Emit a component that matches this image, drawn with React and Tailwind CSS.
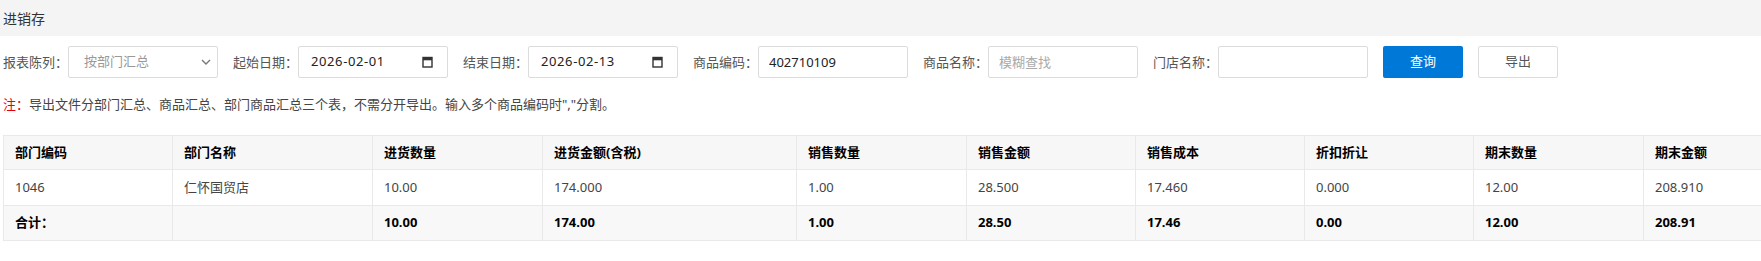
import React from 'react';

const font = { fontFamily: '"Noto Sans", "Noto Sans CJK SC", sans-serif' };

const columns = [
    { label: '部门编码', w: 'w-[169px]' },
    { label: '部门名称', w: 'w-[200px]' },
    { label: '进货数量', w: 'w-[170px]' },
    { label: '进货金额(含税)', w: 'w-[254px]' },
    { label: '销售数量', w: 'w-[170px]' },
    { label: '销售金额', w: 'w-[169px]' },
    { label: '销售成本', w: 'w-[169px]' },
    { label: '折扣折让', w: 'w-[169px]' },
    { label: '期末数量', w: 'w-[170px]' },
    { label: '期末金额', w: 'w-[170px]' },
];

const rows = [['1046', '仁怀国贸店', '10.00', '174.000', '1.00', '28.500', '17.460', '0.000', '12.00', '208.910']];
const total = ['合计：', '', '10.00', '174.00', '1.00', '28.50', '17.46', '0.00', '12.00', '208.91'];

function Label({ children }) {
    return <span className="w-[65px] shrink-0 text-[13px] text-[#555] leading-none">{children}</span>;
}

function CalendarIcon() {
    return (
        <svg width="11" height="12" viewBox="0 0 11 12" className="shrink-0">
            <rect x="1" y="1.5" width="9" height="9.5" fill="none" stroke="#333" strokeWidth="1.4" />
            <rect x="1" y="1.5" width="9" height="2.8" fill="#333" />
        </svg>
    );
}

function DateBox({ value }) {
    return (
        <div className="w-[150px] h-8 shrink-0 border border-[#dcdcdc] rounded-[2px] flex items-center justify-between pl-3 pr-[14px] bg-white">
            <span className="text-[13px] text-[#222] tracking-[0.6px]">{value}</span>
            <CalendarIcon />
        </div>
    );
}

export default function App() {
    return (
        <div className="w-full min-h-[261px] bg-white overflow-hidden" style={font}>
            {/* title bar */}
            <div className="h-9 bg-[#f4f4f4] flex items-center pl-[3px]">
                <span className="text-[14px] text-[#333]">进销存</span>
            </div>

            {/* filters */}
            <div className="flex items-center pl-[3px] mt-[10px] h-8">
                <Label>报表陈列：</Label>
                <div className="w-[150px] h-8 shrink-0 border border-[#dcdcdc] rounded-[2px] flex items-center justify-between pl-[15px] pr-[6px]">
                    <span className="text-[13px] text-[#999]">按部门汇总</span>
                    <svg width="10" height="6" viewBox="0 0 10 6">
                        <path d="M1 1l4 4 4-4" fill="none" stroke="#777" strokeWidth="1.4" />
                    </svg>
                </div>
                <div className="w-[15px] shrink-0" />
                <Label>起始日期：</Label>
                <DateBox value="2026-02-01" />
                <div className="w-[15px] shrink-0" />
                <Label>结束日期：</Label>
                <DateBox value="2026-02-13" />
                <div className="w-[15px] shrink-0" />
                <Label>商品编码：</Label>
                <input
                    readOnly
                    value="402710109"
                    className="w-[150px] h-8 shrink-0 border border-[#dcdcdc] rounded-[2px] px-[10px] text-[13px] text-[#222] outline-none"
                    style={font}
                />
                <div className="w-[15px] shrink-0" />
                <Label>商品名称：</Label>
                <input
                    readOnly
                    placeholder="模糊查找"
                    className="w-[150px] h-8 shrink-0 border border-[#dcdcdc] rounded-[2px] px-[10px] text-[13px] text-[#222] placeholder:text-[#aaa] outline-none"
                    style={font}
                />
                <div className="w-[15px] shrink-0" />
                <Label>门店名称：</Label>
                <input
                    readOnly
                    className="w-[150px] h-8 shrink-0 border border-[#dcdcdc] rounded-[2px] px-[10px] text-[13px] outline-none"
                    style={font}
                />
                <button className="ml-[15px] w-20 h-8 shrink-0 bg-[#0078d7] rounded-[2px] text-white text-[13px]">查询</button>
                <button className="ml-[15px] w-20 h-8 shrink-0 bg-white border border-[#dcdcdc] rounded-[2px] text-[#555] text-[13px]">导出</button>
            </div>

            {/* note */}
            <div className="pl-[3px] mt-[17px] text-[13px] leading-[18px] text-[#444]">
                <span className="text-[#e60012]">注：</span>
                导出文件分部门汇总、商品汇总、部门商品汇总三个表，不需分开导出。输入多个商品编码时","分割。
            </div>

            {/* table */}
            <div className="ml-[3px] mt-[22px] overflow-hidden">
                <table className="border-collapse table-fixed w-[1810px] text-[13px]">
                    <colgroup>
                        {columns.map((c) => (
                            <col key={c.label} className={c.w} />
                        ))}
                    </colgroup>
                    <thead>
                        <tr className="bg-[#f7f7f7] h-[34px]">
                            {columns.map((c) => (
                                <th key={c.label} className="border border-[#e9e9e9] text-left font-bold text-black pl-[11px]">
                                    {c.label}
                                </th>
                            ))}
                        </tr>
                    </thead>
                    <tbody>
                        {rows.map((r, i) => (
                            <tr key={i} className="h-[36px] bg-white">
                                {r.map((v, j) => (
                                    <td key={j} className="border border-[#e9e9e9] pl-[11px] text-[#444]">{v}</td>
                                ))}
                            </tr>
                        ))}
                        <tr className="h-[35px] bg-[#f8f8f8]">
                            {total.map((v, j) => (
                                <td key={j} className="border border-[#e9e9e9] pl-[11px] font-bold text-black">{v}</td>
                            ))}
                        </tr>
                    </tbody>
                </table>
            </div>
        </div>
    );
}
